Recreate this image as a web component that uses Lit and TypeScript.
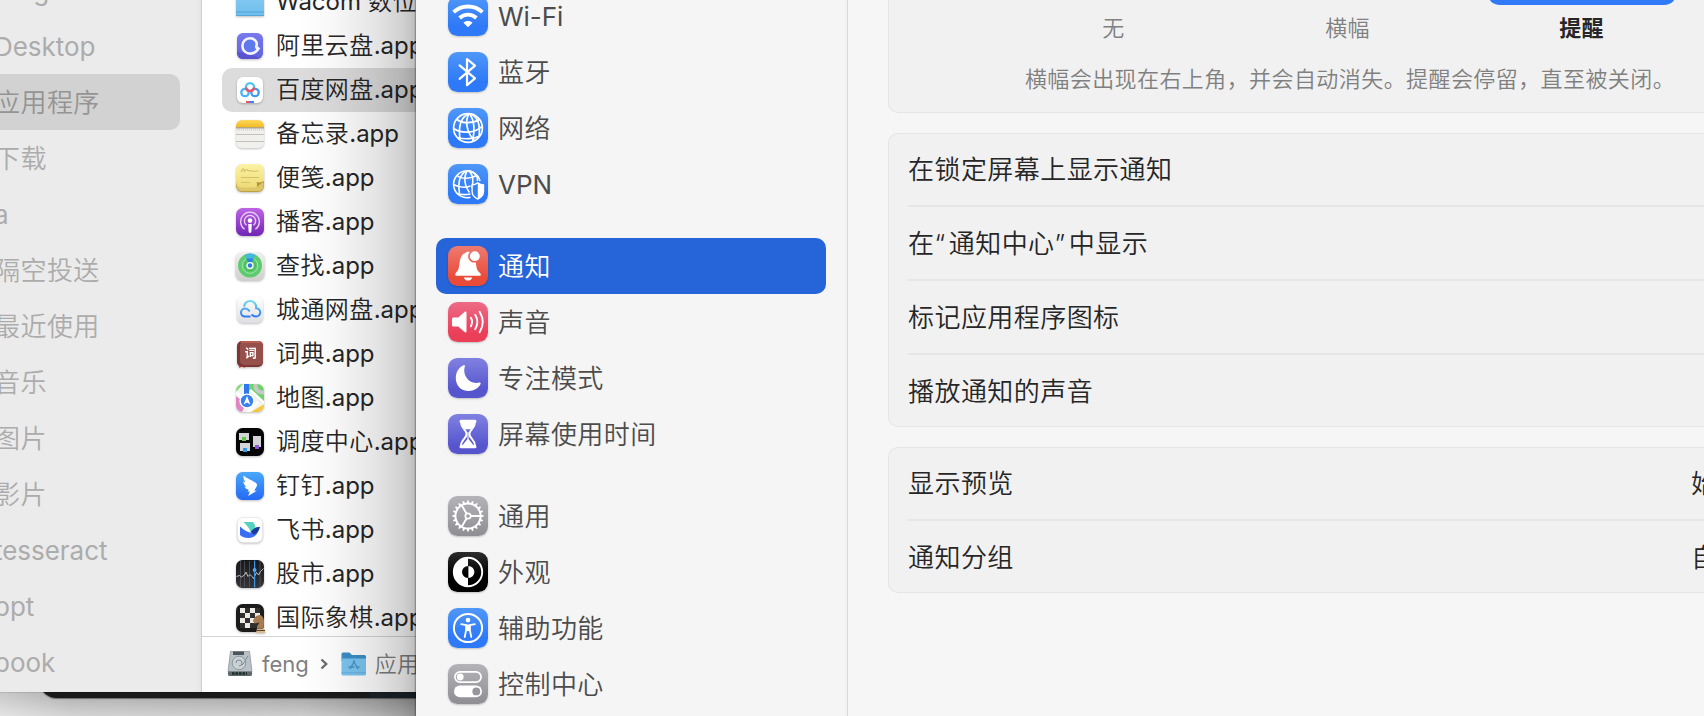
import { LitElement, html, svg, css, SVGTemplateResult } from "lit";
import { customElement } from "lit/decorators.js";
import { classMap } from "lit/directives/class-map.js";

const teeth = Array.from({ length: 20 }, (_, i) => i * 18);

/* 40x40 glyphs for the settings sidebar */
const glyphs: Record<string, SVGTemplateResult> = {
  wifi: svg`<g fill="none" stroke="#fff" stroke-width="3.8"><path d="M5.6 16.2C13.5 8.6 26.5 8.6 34.4 16.2"/><path d="M11.6 22C16.3 17.6 23.7 17.6 28.4 22"/></g><path fill="#fff" d="M20 31.2l-4.6-4.5c2.6-2.4 6.6-2.4 9.2 0z"/>`,
  bluetooth: svg`<path d="M11.6 13.4L27 26.4 19 33.2V7L27 13.6 11.6 26.8" fill="none" stroke="#fff" stroke-width="2.2" stroke-linejoin="round" stroke-linecap="round"/>`,
  globe: svg`<g fill="none" stroke="#fff" stroke-width="1.7"><circle cx="20" cy="20" r="14.4"/><path d="M21 5.800C13 9 10 17 12 31.500M21 5.800C17 12 18 24 26.500 32.500M22 6C26 12 27.500 20 24.500 34M23 6C29.500 9 32.500 17 31 29"/><path d="M9 11.500C14 15.500 24 16 31.500 11.500M5.600 20.500C14 26 27 25.500 34.400 18M9.500 29.500C16 31.500 26 31 30.500 28.500"/></g>`,
  vpn: svg`<g fill="none" stroke="#fff" stroke-width="1.600"><path d="M32 17A13.400 13.400 0 1 0 22.500 33.200"/><path d="M19.500 6.500C12 9.500 9.500 17 11.500 29.500M19.500 6.500C15.500 12 16 21 21.500 28.500M20.500 6.500C25 10 26 15 24 24M21 6.500C27 8.500 30 12 29.500 17"/><path d="M9 11.500C13 15 22 15.500 28.500 11.500M5.500 20.500C10 23 17 24 22.500 22M9 29.500C12 30.500 17 31 22.500 30"/></g><path d="M29.800 18.800c1.900 1.500 3.700 2.100 5.700 2.200v6.500c0 3.600-2.300 6-5.700 7.500-3.400-1.500-5.700-3.900-5.700-7.500V21c2-.1 3.800-.7 5.700-2.200z" fill="#3780f6" stroke="#fff" stroke-width="1.400"/><path d="M29.800 18.800c1.900 1.500 3.700 2.100 5.700 2.200v6.500c0 3.600-2.300 6-5.700 7.500z" fill="#fff"/>`,
  bell: svg`<path fill="#fff" d="M7.200 28.500c0-1.800 2.400-2.700 3.500-6.300 1-3.400.6-7.800 2.400-11.300 1-2 2.400-3.200 4.400-3.800.7-1.300 2.600-1.800 4.300-1-1.800 2.100-2.200 5-.9 7.300 1.400 2.500 4.100 3.700 7 3 .5 5 .8 7 3.100 9.700 1 1.100 1.900 1.700 1.900 2.700 0 .6-.4.900-1.100.9H8.300c-.7 0-1.100-.4-1.100-1.200zM15.800 31.400h8.400c-.5 2-2.100 3.200-4.200 3.200s-3.700-1.200-4.200-3.200z"/><circle cx="26.800" cy="10.200" r="4.900" fill="#fff"/>`,
  sound: svg`<path fill="#fff" d="M4 17c0-1 .6-1.600 1.600-1.600h4.600l6.300-5.400c.9-.8 2-.4 2 .8v18.400c0 1.200-1.100 1.600-2 .8l-6.300-5.400H5.600C4.600 24.600 4 24 4 23z"/><g fill="none" stroke="#fff" stroke-width="1.900" stroke-linecap="round"><path d="M22.900 15.800c1.500 2.600 1.500 5.800 0 8.400M27.200 12.800c2.700 4.500 2.700 9.900 0 14.400M31.600 9.800c4 6.400 4 14 0 20.400"/></g>`,
  moon: svg`<path fill="#fff" d="M15.500 7.200c.9-.4 1.700.3 1.300 1.200-2.500 7.600 3.200 18.400 14.600 16.200 1-.2 1.600.6 1.200 1.500-2 4.100-6.500 6.900-12 6.900C13.200 33 7.800 27.500 7.800 20.200c0-5.900 3-10.900 7.700-13z"/>`,
  hourglass: svg`<path d="M13 7.200h14M13 32.800h14" stroke="#fff" stroke-width="3" stroke-linecap="round"/><path d="M13 8c0 7 5.600 7.500 5.600 12S13 25 13 32h14c0-7-5.600-7.500-5.600-12S27 15 27 8z" fill="none" stroke="#fff" stroke-width="2"/><path fill="#fff" d="M13.500 8h13c-.2 3-1.600 5-3.600 7.200h-5.800C15.100 13 13.700 11 13.500 8zM20 24.500l4.600 5.500c.6.800.3 1.800-.7 1.800h-7.800c-1 0-1.300-1-.7-1.800z"/><path d="M20 18v8" stroke="#fff"/>`,
  gear: svg`<circle cx="20" cy="20" r="12.600" fill="none" stroke="#fff" stroke-width="2"/>${teeth.map((a) => svg`<path d="M18.700 7.600l.6-3.200h1.400l.6 3.200z" fill="#fff" transform="rotate(${a} 20 20)"/>`)}<circle cx="20" cy="20" r="2.700" fill="none" stroke="#fff" stroke-width="1.700"/><path d="M23 20h10M18.500 17.400L13.500 9M18.500 22.600L13.500 31" stroke="#fff" stroke-width="1.900"/>`,
  appearance: svg`<circle cx="20" cy="20" r="14.200" fill="none" stroke="#fff" stroke-width="1.900"/><path fill="#fff" d="M20 5.500a14.500 14.500 0 0 0 0 29v-8.500a6 6 0 0 1 0-12zM20.400 14a6 6 0 0 1 0 12z"/>`,
  access: svg`<circle cx="20" cy="20" r="14.100" fill="none" stroke="#fff" stroke-width="2"/><circle cx="20" cy="12.100" r="2.300" fill="#fff"/><path d="M13.200 16.200l5 .9v4.800L16.700 29M26.800 16.200l-5 .9v4.800L23.300 29" fill="none" stroke="#fff" stroke-width="1.800" stroke-linecap="round" stroke-linejoin="round"/><path fill="#fff" d="M17.600 16.400h4.800v6.200l-2.400.6-2.400-.6z"/>`,
  control: svg`<rect x="6.900" y="7.900" width="26.200" height="10.200" rx="5.100" fill="none" stroke="#fff" stroke-width="1.700"/><circle cx="12.200" cy="13" r="3.400" fill="#fff"/><rect x="6" y="21.600" width="28" height="11.600" rx="5.800" fill="#fff"/><circle cx="28.300" cy="27.400" r="3.900" fill="#96969b"/>`,
};

const grad = (id: string, a: string, b: string) =>
  svg`<linearGradient id=${id} x1="0" y1="0" x2="0" y2="1"><stop offset="0" stop-color=${a}/><stop offset="1" stop-color=${b}/></linearGradient>`;

/* 32x32 app icons for the file list */
const apps: Record<string, SVGTemplateResult> = {
  folder: svg`${grad("g-fo", "#8fd0f5", "#6dbcec")}<path d="M2 2h28v26.500a1.500 1.500 0 0 1-1.500 1.500h-25A1.500 1.500 0 0 1 2 28.500z" fill="url(#g-fo)"/><path d="M2 26h28M2 29.500h28" stroke="#4fa0d4" stroke-width=".8"/>`,
  aliyun: svg`${grad("g-al", "#7a79ee", "#5d63dc")}<rect x="3" y="3" width="26" height="26" rx="6" fill="url(#g-al)"/><path d="M3 22c8 1 16 2 22 6.500l-2 .5H9a6 6 0 0 1-6-6z" fill="#5a55cf"/><circle cx="16" cy="16" r="6" fill="#5e79ee"/><path d="M25.200 17.400c-2 1.600-3.600.6-2.600-2.200.8-3.600-2.300-7-6.700-6.900-4.500.1-7.700 3.600-7.500 7.900.2 4.400 3.800 7.600 8.100 7.400 3.200-.1 6.500-2 8.700-6.200" fill="none" stroke="#f4f4ff" stroke-width="2.600" stroke-linejoin="round"/>`,
  baidu: svg`<rect x="3" y="3" width="26" height="26" rx="6" fill="#fff"/><g fill="none" stroke-width="2.300"><circle cx="11" cy="18.500" r="3.700" stroke="#43b4f5"/><circle cx="21" cy="18.500" r="3.700" stroke="#4298f0"/><circle cx="16" cy="13.200" r="4.100" stroke="#4cc4f5"/><path d="M11.900 13.500a4.150 4.150 0 0 0 8.200 0" stroke="#ea5268"/></g><path d="M12 28h4" stroke="#ef4f62" stroke-width="2"/><path d="M16 28h4" stroke="#3c82f0" stroke-width="2"/>`,
  notes: svg`${grad("g-n", "#fbd85c", "#f5b91f")}<rect x="2" y="2" width="28" height="28" rx="6" fill="#f1f0ec"/><path d="M2 9.500V8a6 6 0 0 1 6-6h16a6 6 0 0 1 6 6v1.500z" fill="url(#g-n)"/><path d="M2 9.900h28" stroke="#8d8876" stroke-width="1"/><path d="M3 11.800h27" stroke="#b5b3ae" stroke-width=".8" stroke-dasharray="1 1"/><path d="M2 16.500h28M2 23.500h28" stroke="#c2c1bd" stroke-width="1"/>`,
  stickies: svg`${grad("g-st", "#fbf3a4", "#eedb77")}<path d="M2 19h28v5a6 6 0 0 1-6 6H8a6 6 0 0 1-6-6z" fill="#bda040"/><path d="M2.500 21h27v2.500a5.500 5.500 0 0 1-5.500 5.500H8a5.500 5.500 0 0 1-5.500-5.500z" fill="#dcc768"/><path d="M8 2h16a6 6 0 0 1 6 6v11l-7.500 6.500H8a6 6 0 0 1-6-6V8a6 6 0 0 1 6-6z" fill="url(#g-st)"/><path d="M22.500 25.500c1-2 .5-4 0-5.500 2.500.8 5 .5 7.500-1z" fill="#b2953c"/><path d="M7 10c1.500-4 3-4 3-1 0 2 2-3 3.500-1 1 2 2 0 3 .5l2 1 6-.5M7 15.500h18M7 20.500h9" stroke="#d8bf69" stroke-width="1.100" fill="none"/>`,
  podcasts: svg`${grad("g-po", "#bd64e6", "#7025b5")}<rect x="2" y="2" width="28" height="28" rx="6.500" fill="url(#g-po)"/><g fill="none" stroke="#ead3f7" stroke-width="1.300"><path d="M10.600 23.300a9.400 9.400 0 1 1 10.800 0M12.500 19.300a5.600 5.600 0 1 1 7 0"/></g><circle cx="16" cy="14.600" r="2.300" fill="#fff"/><path d="M14.200 18h3.600l-.4 7.500a1.400 1.400 0 0 1-2.800 0z" fill="#fff"/>`,
  find: svg`${grad("g-fi", "#f0f0f0", "#cfd0cd")}<rect x="1.500" y="2" width="29" height="28.500" rx="6.500" fill="url(#g-fi)"/><circle cx="16" cy="15.500" r="12" fill="#5fcb70"/><g fill="none" stroke="#a0e8a0"><circle cx="16" cy="15.500" r="7.800"/><circle cx="16" cy="15.500" r="5.500" stroke="#47b55e"/></g><path d="M16 15.500L10.500 4.800a12 12 0 0 1 11 0z" fill="#46b9db"/><path d="M16 15.500l-3.800-7h7.600z" fill="#2d83e2"/><circle cx="16" cy="15.500" r="3.500" fill="#fff"/><circle cx="16" cy="15.500" r="2.200" fill="#2f74e8"/>`,
  cloud: svg`${grad("g-cl", "#fff", "#dedfe2")}${grad("g-cs", "#72d9ec", "#2f7bf2")}<rect x="3" y="3" width="26" height="26" rx="6" fill="url(#g-cl)"/><path d="M17.500 20.500c1.500 1.600 3 2 4.500 2a3.900 3.900 0 0 0 .2-8.300C22.500 9.500 19.500 7 16.200 7c-3.500 0-5.700 2.300-6 5.700M15.800 17.300c-1.600-1.900-2.900-2.700-4.700-2.700-2.300 0-4.100 1.700-4.100 4s1.800 4 4.100 4h5.400" fill="none" stroke="url(#g-cs)" stroke-width="2"/>`,
  dict: svg`<path d="M5 26h6v4l-3-1.500L5 30z" fill="#dd4033"/><rect x="3" y="3" width="26" height="26" rx="5" fill="#7c3734"/><rect x="6" y="3" width="23" height="24" rx="4.500" fill="#96504b"/><path d="M7 4h20" stroke="#d06a5c" stroke-width="1.200"/><text x="16.800" y="20" font-size="12" font-weight="700" fill="#fff" text-anchor="middle">词</text>`,
  maps: svg`<clipPath id="c-ma"><rect x="2" y="2" width="28" height="28" rx="6.500"/></clipPath><g clip-path="url(#c-ma)"><path d="M2 2h28v28H2z" fill="#f3f3f1"/><path d="M2 2h7L2 10z" fill="#82d977"/><path d="M15 2h15v21L15 9z" fill="#72d36c"/><path d="M2 14l10 8-4 8H2z" fill="#e086c4"/><path d="M17 30l10-6v6z" fill="#f5c842"/><path d="M27 24l3-2v8h-3z" fill="#f5c842"/><path d="M16 8L31 22M2 10l12 12M14 30l10-10" stroke="#fff" stroke-width="3"/><circle cx="28" cy="4" r="6.500" fill="none" stroke="#c6c8ca" stroke-width="4"/><path d="M10 2h5v12h-5z" fill="#2f77ed"/></g><circle cx="13" cy="19" r="7.600" fill="#fff"/><circle cx="13" cy="19" r="6.200" fill="#3880ef"/><path d="M13 14l3.400 8.500L13 20.400 9.600 22.500z" fill="#fff"/>`,
  mission: svg`<rect x="2" y="2" width="28" height="28" rx="6.500" fill="#050505"/><path d="M5 7h10v7H5zM6 17h10v8H6zM19 10h8v11h-8z" fill="#d3d4d8"/><path d="M8 11h4v4H8z" fill="#5fca46"/><path d="M9 22h4v4H9z" fill="#2d9be8"/><path d="M21 19h4v4h-4z" fill="#8b56d6"/>`,
  ding: svg`${grad("g-di", "#4aa8f8", "#2469f5")}<rect x="2" y="2" width="28" height="28" rx="6.500" fill="url(#g-di)"/><path d="M9.500 5.500c3 3 8.500 4.500 12.500 7.500 1.600 1.300 1 2.800.2 4.200l-2 3.600h2.500L14.200 26l1.600-4.500h-2.200l1.200-1.800c-2-.3-3.600-1.300-4.300-3.200l2.300.2c-2.200-1.200-3.400-3-3.600-5.200l2.300.8C10 10.300 9 8 9.500 5.500z" fill="#fff"/>`,
  feishu: svg`<rect x="3.500" y="3.500" width="25" height="25" rx="6" fill="#fff" stroke="#e3e3e3" stroke-width=".6"/><path d="M9.500 8h9.500c2 2.500 2.500 5 2.500 7l-4.500 3.500C15.500 14 12.500 11 9.500 8z" fill="#55d2bb"/><path d="M6 12.500c4.500 4 8.500 6.500 13 6.500 3 0 4.500-2 6.500-6.500-1.500 8-5 11.500-11 11.500-4 0-6.500-1.200-8.500-3z" fill="#3a6ff4"/><path d="M16.500 18c3.500-4.500 6-5.500 9.500-5-1 3-2 6-6 7.500z" fill="#173b9e"/>`,
  stocks: svg`${grad("g-sk", "#17181a", "#34353b")}<rect x="2" y="2" width="28" height="28" rx="6.500" fill="url(#g-sk)"/><path d="M6.500 3v26M10.500 3v26M15.500 3v26M26 3v26" stroke="#5b5c61" stroke-width=".7"/><path d="M2.500 18.500l3-1 2 1.500 3-2 1.500-3 2 4.500 2-2 2 2 1.500 2 3-6 2 2.500 2-3.500 3-3" fill="none" stroke="#cfcfcf" stroke-width=".9"/><path d="M20.600 2.500v27" stroke="#3a93e0" stroke-width="1.300"/><circle cx="20.600" cy="12" r="1.900" fill="#4ba9f4"/>`,
  chess: svg`<rect x="2" y="2" width="28" height="28" rx="6.500" fill="#1c1b1a"/><path d="M6 6h20v20H6z" fill="#31302e"/><path d="M6 6h5v5H6zM16 6h5v5h-5zM11 11h5v5h-5zM21 11h5v5h-5zM6 16h5v5H6zM16 16h5v5h-5zM11 21h5v5h-5z" fill="#ecebe8"/><path d="M19 19c1-4 4-6 7.500-6 4 2 4 7 3 13h-6.500c0-3 2-4 2.500-5.500-2 0-3.500 1-5 1z" fill="#a67c50"/><path d="M23 26.500h7l1.500 4.500h-9.500z" fill="#d9bd92"/><path d="M22.500 28.500h8.500" stroke="#5d3d20"/>`,
};

/* Wraps runs of Latin characters so they can be tracked apart from Chinese text */
const mixed = (text: string) =>
  text.split(/([\x21-\x7e]+)/).map((part) => (/^[\x21-\x7e]/.test(part) ? html`<span class="latin">${part}</span>` : part));

@customElement("app-root")
export class AppRoot extends LitElement {
  static styles = css`
    :host {
      display: block;
      position: relative;
      width: 1704px;
      height: 716px;
      overflow: hidden;
      font-family: Inter, "Noto Sans CJK SC", sans-serif;
      font-weight: 350;
      color: #262626;
      background: linear-gradient(90deg, #d0d0d0 0, #b4b4b4 70px, #a8a8a8 300px, #969696 416px);
    }
    svg { display: block; flex: none; }
    .latin { font-weight: 370; letter-spacing: -.03px; }
    .ground { position: absolute; left: 0; top: 692px; width: 416px; height: 24px; background: linear-gradient(180deg, rgba(0,0,0,.04), rgba(255,255,255,.42)); }
    .behind { position: absolute; left: 40px; top: 600px; width: 400px; height: 98px; border-radius: 0 0 0 16px; background: linear-gradient(90deg, #1a1a1a 330px, #1a2228 330px); box-shadow: 0 1px 1px rgba(0,0,0,.4); }

    .finder { position: absolute; left: 0; top: 0; width: 416px; height: 692px; display: flex; overflow: hidden; background: #fff; box-shadow: 0 0 1px rgba(0,0,0,.5); }
    .places { width: 202px; flex: none; box-sizing: border-box; overflow: hidden; background: linear-gradient(90deg, #ebebeb 196px, #e4e4e4 201px, #cfcfcf 201px); }
    .places-rows { margin-top: -38px; width: 180px; }
    .place { height: 56px; box-sizing: border-box; margin-left: -6px; padding-top: 1px; line-height: 56px; font-size: 26px; letter-spacing: .44px; color: #acacac; white-space: nowrap; }
    .place.on { margin-left: -20px; padding-left: 14px; background: #d2d2d2; border-radius: 10px; color: #949494; }
    .files { flex: 1; min-width: 0; display: flex; flex-direction: column; }
    .file-rows { height: 636px; overflow: hidden; }
    .file-rows-in { margin-top: -20px; }
    .file { display: flex; align-items: center; height: 44px; margin-left: 20px; padding-left: 12px; font-size: 24px; letter-spacing: .42px; white-space: nowrap; }
    .file.on { background: #dcdcdc; border-radius: 10px 0 0 10px; }
    .app-icon { filter: drop-shadow(0 1px 1px rgba(0,0,0,.25)); }
    .app-icon text { font-family: "Noto Sans CJK SC", sans-serif; letter-spacing: 0; }
    .file-name { margin-left: 10px; line-height: 44px; }
    .path { height: 56px; box-sizing: border-box; border-top: 1px solid #d4d4d4; display: flex; align-items: center; padding: 0 0 1px 24px; font-size: 22px; letter-spacing: .3px; color: #808080; white-space: nowrap; }
    .crumb { margin-left: 8px; line-height: 54px; }
    .sep { margin: 0 13px 0 11px; }
    .shade { position: absolute; left: 300px; top: 0; width: 116px; height: 716px; background: linear-gradient(90deg, rgba(0,0,0,0) 0, rgba(0,0,0,.03) 30%, rgba(0,0,0,.1) 65%, rgba(0,0,0,.18) 88%, rgba(0,0,0,.25) 98.500%, rgba(0,0,0,.45) 99.200%); }

    .settings { position: absolute; left: 416px; top: 0; width: 1400px; height: 716px; display: flex; background: #f6f6f6; overflow: hidden; }
    .nav { width: 432px; flex: none; box-sizing: border-box; padding: 0 22px 0 20px; background: linear-gradient(90deg, #f5f5f5 428px, #efefef 431px, #d9d9d9 431px); }
    .nav-group { margin-bottom: 26px; }
    .nav-group:first-child { margin-top: -12px; }
    .nav-item { display: flex; align-items: center; height: 56px; padding-left: 12px; border-radius: 10px; font-size: 26px; letter-spacing: .44px; color: #4c4c4c; white-space: nowrap; }
    .nav-item.on { background: #2664d9; color: #fff; }
    .nav-label { margin-left: 10px; padding-top: 2px; line-height: 56px; }
    .tile { width: 40px; height: 40px; border-radius: 9.500px; box-shadow: 0 1px 2px rgba(0,0,0,.22); }
    .blue { background: linear-gradient(#4f97f8, #2e79f7 75%); }
    .red { background: linear-gradient(#ee7a70, #ea4a38 80%); }
    .pink { background: linear-gradient(#ec6b87, #eb3e59 80%); }
    .indigo { background: linear-gradient(#8181e2, #5655cd 80%); }
    .gray { background: linear-gradient(#b4b4b8, #8e8e93); }
    .black { background: linear-gradient(#2c2c2c, #000 60%); }

    .content { flex: none; width: 917px; padding-left: 40px; display: flex; flex-direction: column; gap: 20px; }
    .card { box-sizing: border-box; background: #f1f1f1; border-radius: 10px; box-shadow: inset 0 0 0 1px #e5e5e5; padding: 0 20px; }
    .card.style-card { height: 153px; margin-top: -40px; padding: 0 107px 0 109px; }
    .choices { display: grid; grid-template-columns: repeat(3, 234px); justify-content: center; }
    .choice { display: flex; flex-direction: column; align-items: center; font-size: 22px; color: #808080; letter-spacing: .37px; }
    .thumb { width: 190px; height: 45px; border-radius: 13px; }
    .choice.on { color: #262626; font-weight: 700; }
    .choice.on .thumb { background: #3079f7; }
    .choice-name { line-height: 30px; margin-top: 8px; }
    .hint { margin-top: 21px; padding-left: 5px; text-align: center; line-height: 30px; font-size: 22px; letter-spacing: .42px; color: #808080; white-space: nowrap; }
    .row { display: flex; justify-content: space-between; height: 72px; line-height: 74px; font-size: 26px; letter-spacing: .44px; }
    .row + .row { border-top: 2px solid #e6e6e6; }
    .value { width: 94px; }
    .quote { letter-spacing: 3.700px; }
  `;

  private places = ["feng", "Desktop", "应用程序", "下载", "a", "隔空投送", "最近使用", "音乐", "图片", "影片", "tesseract", "ppt", "book"];

  private files = [
    ["folder", "Wacom 数位板"],
    ["aliyun", "阿里云盘.app"],
    ["baidu", "百度网盘.app"],
    ["notes", "备忘录.app"],
    ["stickies", "便笺.app"],
    ["podcasts", "播客.app"],
    ["find", "查找.app"],
    ["cloud", "城通网盘.app"],
    ["dict", "词典.app"],
    ["maps", "地图.app"],
    ["mission", "调度中心.app"],
    ["ding", "钉钉.app"],
    ["feishu", "飞书.app"],
    ["stocks", "股市.app"],
    ["chess", "国际象棋.app"],
  ];

  private nav = [
    [["wifi", "blue", "Wi-Fi"], ["bluetooth", "blue", "蓝牙"], ["globe", "blue", "网络"], ["vpn", "blue", "VPN"]],
    [["bell", "red", "通知"], ["sound", "pink", "声音"], ["moon", "indigo", "专注模式"], ["hourglass", "indigo", "屏幕使用时间"]],
    [["gear", "gray", "通用"], ["appearance", "black", "外观"], ["access", "blue", "辅助功能"], ["control", "gray", "控制中心"]],
  ];

  private renderFinder() {
    return html`
      <div class="finder">
        <div class="places"><div class="places-rows">
          ${this.places.map((p) => html`<div class=${classMap({ place: true, on: p === "应用程序" })}>${mixed(p)}</div>`)}
        </div></div>
        <div class="files">
          <div class="file-rows"><div class="file-rows-in">
            ${this.files.map(([icon, name]) => html`
              <div class=${classMap({ file: true, on: icon === "baidu" })}>
                <svg class="app-icon" width="32" height="32" viewBox="0 0 32 32">${apps[icon]}</svg>
                <span class="file-name">${mixed(name)}</span>
              </div>`)}
          </div></div>
          <div class="path">
            <svg width="28" height="28" viewBox="0 0 28 28">
              <path d="M4.500 1.500h19l2.500 20H2z" fill="#b9c1c6" stroke="#8d979d" stroke-width=".8"/>
              <path d="M7 1.500h11v3.500H7z" fill="#4d5459"/>
              <circle cx="13" cy="13" r="6.800" fill="#c9d1d6" stroke="#7f8a90" stroke-width=".8"/>
              <path d="M10 13a3 3 0 1 1 3 3M16 15c3-2 4-7 6-9" fill="none" stroke="#7f8a90"/>
              <path d="M2 21.500h24v3a1.500 1.500 0 0 1-1.500 1.500h-21A1.500 1.500 0 0 1 2 24.500z" fill="#5f6a6c"/>
              <path d="M6 23.500h15" stroke="#1f2b25" stroke-width="2.500" stroke-dasharray="2.500 1"/>
            </svg>
            <span class="crumb">${mixed("feng")}</span>
            <svg class="sep" width="8" height="14" viewBox="0 0 8 14"><path d="M1.500 2.500L6.200 7l-4.700 4.500" fill="none" stroke="#6e6e6e" stroke-width="2.400"/></svg>
            <svg width="26" height="26" viewBox="0 0 26 26">
              <path d="M.5 3A1.500 1.500 0 0 1 2 1.500h6.500L11 4h12.500A1.500 1.500 0 0 1 25 5.500V10H.5z" fill="#3c8fc7"/>
              <path d="M.5 7.500H25V23a1.500 1.500 0 0 1-1.500 1.500H2A1.500 1.500 0 0 1 .5 23z" fill="#7cc6f1"/>
              <path d="M.5 21.800H25" stroke="#5fabdc" stroke-width=".8"/>
              <path d="M13.800 9.500L9 18M12.200 9.500L17 18M7.500 16h6M15.500 16h3" stroke="#4694c8" stroke-width="1.400" fill="none"/>
            </svg>
            <span class="crumb">应用程序</span>
          </div>
        </div>
      </div>`;
  }

  private renderSettings() {
    return html`
      <div class="settings">
        <div class="nav">
          ${this.nav.map((group) => html`<div class="nav-group">
            ${group.map(([icon, tone, label]) => html`
              <div class=${classMap({ "nav-item": true, on: icon === "bell" })}>
                <svg class="tile ${tone}" viewBox="0 0 40 40">${glyphs[icon]}</svg>
                <span class="nav-label">${mixed(label)}</span>
              </div>`)}
          </div>`)}
        </div>
        <div class="content">
          <div class="card style-card">
            <div class="choices">
              ${["无", "横幅", "提醒"].map((c) => html`<div class=${classMap({ choice: true, on: c === "提醒" })}><div class="thumb"></div><div class="choice-name">${c}</div></div>`)}
            </div>
            <div class="hint">横幅会出现在右上角，并会自动消失。提醒会停留，直至被关闭。</div>
          </div>
          <div class="card">
            <div class="row">在锁定屏幕上显示通知</div>
            <div class="row"><span>在<span class="quote">“</span>通知中心<span class="quote">”</span>中显示</span></div>
            <div class="row">标记应用程序图标</div>
            <div class="row">播放通知的声音</div>
          </div>
          <div class="card">
            <div class="row"><span>显示预览</span><span class="value">始终</span></div>
            <div class="row"><span>通知分组</span><span class="value">自动</span></div>
          </div>
        </div>
      </div>`;
  }

  render() {
    return html`
      <div class="ground"></div>
      <div class="behind"></div>
      ${this.renderFinder()}
      <div class="shade"></div>
      ${this.renderSettings()}
    `;
  }
}
